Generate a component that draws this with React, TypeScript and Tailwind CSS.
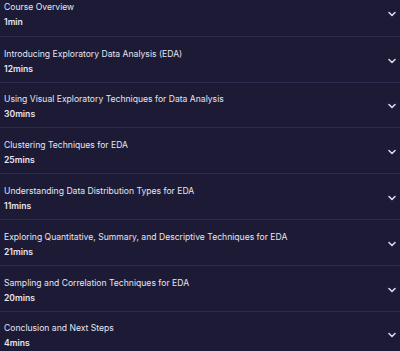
const MODULES = [
  { title: "Course Overview", length: "1min" },
  { title: "Introducing Exploratory Data Analysis (EDA)", length: "12mins" },
  { title: "Using Visual Exploratory Techniques for Data Analysis", length: "30mins" },
  { title: "Clustering Techniques for EDA", length: "25mins" },
  { title: "Understanding Data Distribution Types for EDA", length: "11mins" },
  { title: "Exploring Quantitative, Summary, and Descriptive Techniques for EDA", length: "21mins" },
  { title: "Sampling and Correlation Techniques for EDA", length: "20mins" },
  { title: "Conclusion and Next Steps", length: "4mins" },
];

function Chevron() {
  return (
    <svg width="8" height="6" viewBox="0 0 8 6" fill="none" className="mt-[3px] text-[#d8d6ee]">
      <path d="M1 1.5 L4 4.5 L7 1.5" stroke="currentColor" strokeWidth="1.6" strokeLinecap="round" strokeLinejoin="round" />
    </svg>
  );
}

export default function App() {
  return (
    <div className="w-[400px] h-[351px] overflow-hidden bg-[#1c1a34]" style={{ fontFamily: "Inter, 'Liberation Sans', sans-serif" }}>
      <div className="-mt-[10px]">
        {MODULES.map((m, i) => (
          <div
            key={m.title}
            className={`flex items-center justify-between pl-[4px] pr-[4px] h-[45.8px] ${i > 0 ? "border-t border-[#2e2b50]" : ""}`}
          >
            <div className="flex flex-col leading-[15px] pt-[5px]">
              <span className="text-[8.6px] text-[#e6e5f2]">{m.title}</span>
              <span className="text-[8.6px] font-semibold text-[#e6e5f2]">{m.length}</span>
            </div>
            <Chevron />
          </div>
        ))}
      </div>
    </div>
  );
}
